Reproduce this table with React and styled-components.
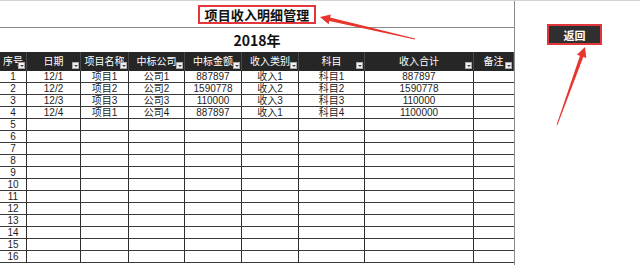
import React from 'react';
import styled, { createGlobalStyle } from 'styled-components';

const GlobalStyle = createGlobalStyle`
  html, body {
    margin: 0;
    padding: 0;
    background: #fff;
  }
  body {
    font-family: 'Noto Sans CJK SC', 'Noto Sans', sans-serif;
  }
`;

const COLUMNS = [
  { title: '序号', width: 27 },
  { title: '日期', width: 54 },
  { title: '项目名称', width: 48 },
  { title: '中标公司', width: 56 },
  { title: '中标金额', width: 57 },
  { title: '收入类别', width: 57 },
  { title: '科目', width: 66 },
  { title: '收入合计', width: 109 },
  { title: '备注', width: 40 },
];

const ROWS = [
  ['1', '12/1', '项目1', '公司1', '887897', '收入1', '科目1', '887897', ''],
  ['2', '12/2', '项目2', '公司2', '1590778', '收入2', '科目2', '1590778', ''],
  ['3', '12/3', '项目3', '公司3', '110000', '收入3', '科目3', '110000', ''],
  ['4', '12/4', '项目1', '公司4', '887897', '收入1', '科目4', '1100000', ''],
];

const Page = styled.div`
  position: relative;
  display: flex;
  width: 640px;
  height: 265px;
  overflow: hidden;
  border-top: 1px solid #d4d4d4;
  box-sizing: border-box;
`;

const Sheet = styled.div`
  width: 514px;
  border-right: 1px solid #8c8c8c;
  display: flex;
  flex-direction: column;
  flex-shrink: 0;
`;

const TitleBar = styled.div`
  height: 26px;
  border-bottom: 1px solid #8a8a8a;
  display: flex;
  justify-content: center;
  align-items: center;
`;

const TitleBox = styled.div`
  border: 2px solid #e2363a;
  padding: 0 5px;
  height: 15px;
  line-height: 15px;
  font-size: 13px;
  font-weight: 700;
  color: #111;
  letter-spacing: 0.1px;
`;

const YearBar = styled.div`
  height: 24px;
  display: flex;
  justify-content: center;
  align-items: center;
  font-size: 14px;
  font-weight: 700;
  color: #111;
`;

const Table = styled.div`
  display: grid;
  grid-template-columns: ${({ $cols }) => $cols};
  font-family: 'Liberation Sans', 'Noto Sans CJK SC', sans-serif;
`;

const HeadCell = styled.div`
  position: relative;
  height: 19px;
  background: #262626;
  border-right: 1px solid #474747;
  display: flex;
  justify-content: center;
  align-items: center;
  color: #fff;
  font-size: 10px;
  line-height: 12px;
  white-space: nowrap;
  box-sizing: border-box;
  &:last-child {
    border-right: none;
  }
`;

const FilterButton = styled.span`
  position: absolute;
  right: 1px;
  bottom: 2px;
  width: 7px;
  height: 7px;
  background: #f2f2f2;
  border: 1px solid #a8a8a8;
  box-sizing: border-box;
  display: flex;
  justify-content: center;
  align-items: center;

  &::after {
    content: '';
    border-left: 2px solid transparent;
    border-right: 2px solid transparent;
    border-top: 2px solid #444;
  }
`;

const Cell = styled.div`
  height: 12px;
  border-right: 1px solid #2e2e2e;
  border-bottom: 1px solid #3a3a3a;
  box-sizing: border-box;
  display: flex;
  justify-content: center;
  align-items: center;
  font-size: 10px;
  line-height: 10px;
  color: #1e1e1e;
  white-space: nowrap;
  &:nth-child(9n) {
    border-right: none;
  }
`;

const Side = styled.div`
  flex: 1;
  padding: 23px 0 0 32px;
`;

const BackButton = styled.div`
  width: 55px;
  height: 21px;
  box-sizing: border-box;
  background: #2f2f2f;
  border: 2px solid #e0353a;
  color: #fff;
  font-size: 11px;
  font-weight: 700;
  display: flex;
  justify-content: center;
  align-items: center;
  cursor: pointer;
`;

const Overlay = styled.svg`
  position: absolute;
  left: 0;
  top: 0;
  pointer-events: none;
`;

const Arrow = ({ tip, tail, head = 10, spread = 5, base = 1.8, end = 0.4 }) => {
  const dx = tip[0] - tail[0];
  const dy = tip[1] - tail[1];
  const len = Math.hypot(dx, dy);
  const ux = dx / len;
  const uy = dy / len;
  const nx = -uy;
  const ny = ux;
  const bx = tip[0] - head * ux;
  const by = tip[1] - head * uy;
  const pts = [
    [tip[0], tip[1]],
    [bx + spread * nx, by + spread * ny],
    [bx + base * nx, by + base * ny],
    [tail[0] + end * nx, tail[1] + end * ny],
    [tail[0] - end * nx, tail[1] - end * ny],
    [bx - base * nx, by - base * ny],
    [bx - spread * nx, by - spread * ny],
  ];
  return <polygon points={pts.map((p) => p.join(',')).join(' ')} fill="#e8352e" />;
};

const emptyRows = Array.from({ length: 12 }, (_, i) => [String(i + 5), '', '', '', '', '', '', '', '']);

export default function App() {
  const rows = [...ROWS, ...emptyRows];

  return (
    <>
      <GlobalStyle />
      <Page>
        <Sheet>
          <TitleBar>
            <TitleBox>项目收入明细管理</TitleBox>
          </TitleBar>
          <YearBar>2018年</YearBar>
          <Table $cols={COLUMNS.map((c) => `${c.width}px`).join(' ')}>
            {COLUMNS.map((c) => (
              <HeadCell key={c.title}>
                {c.title}
                <FilterButton />
              </HeadCell>
            ))}
            {rows.map((row, r) =>
              row.map((value, i) => <Cell key={`${r}-${i}`}>{value}</Cell>)
            )}
          </Table>
        </Sheet>
        <Side>
          <BackButton>返回</BackButton>
        </Side>
        <Overlay width="640" height="265">
          <Arrow tip={[320, 16]} tail={[415, 38]} />
          <Arrow tip={[585, 46]} tail={[557, 124]} />
        </Overlay>
      </Page>
    </>
  );
}
